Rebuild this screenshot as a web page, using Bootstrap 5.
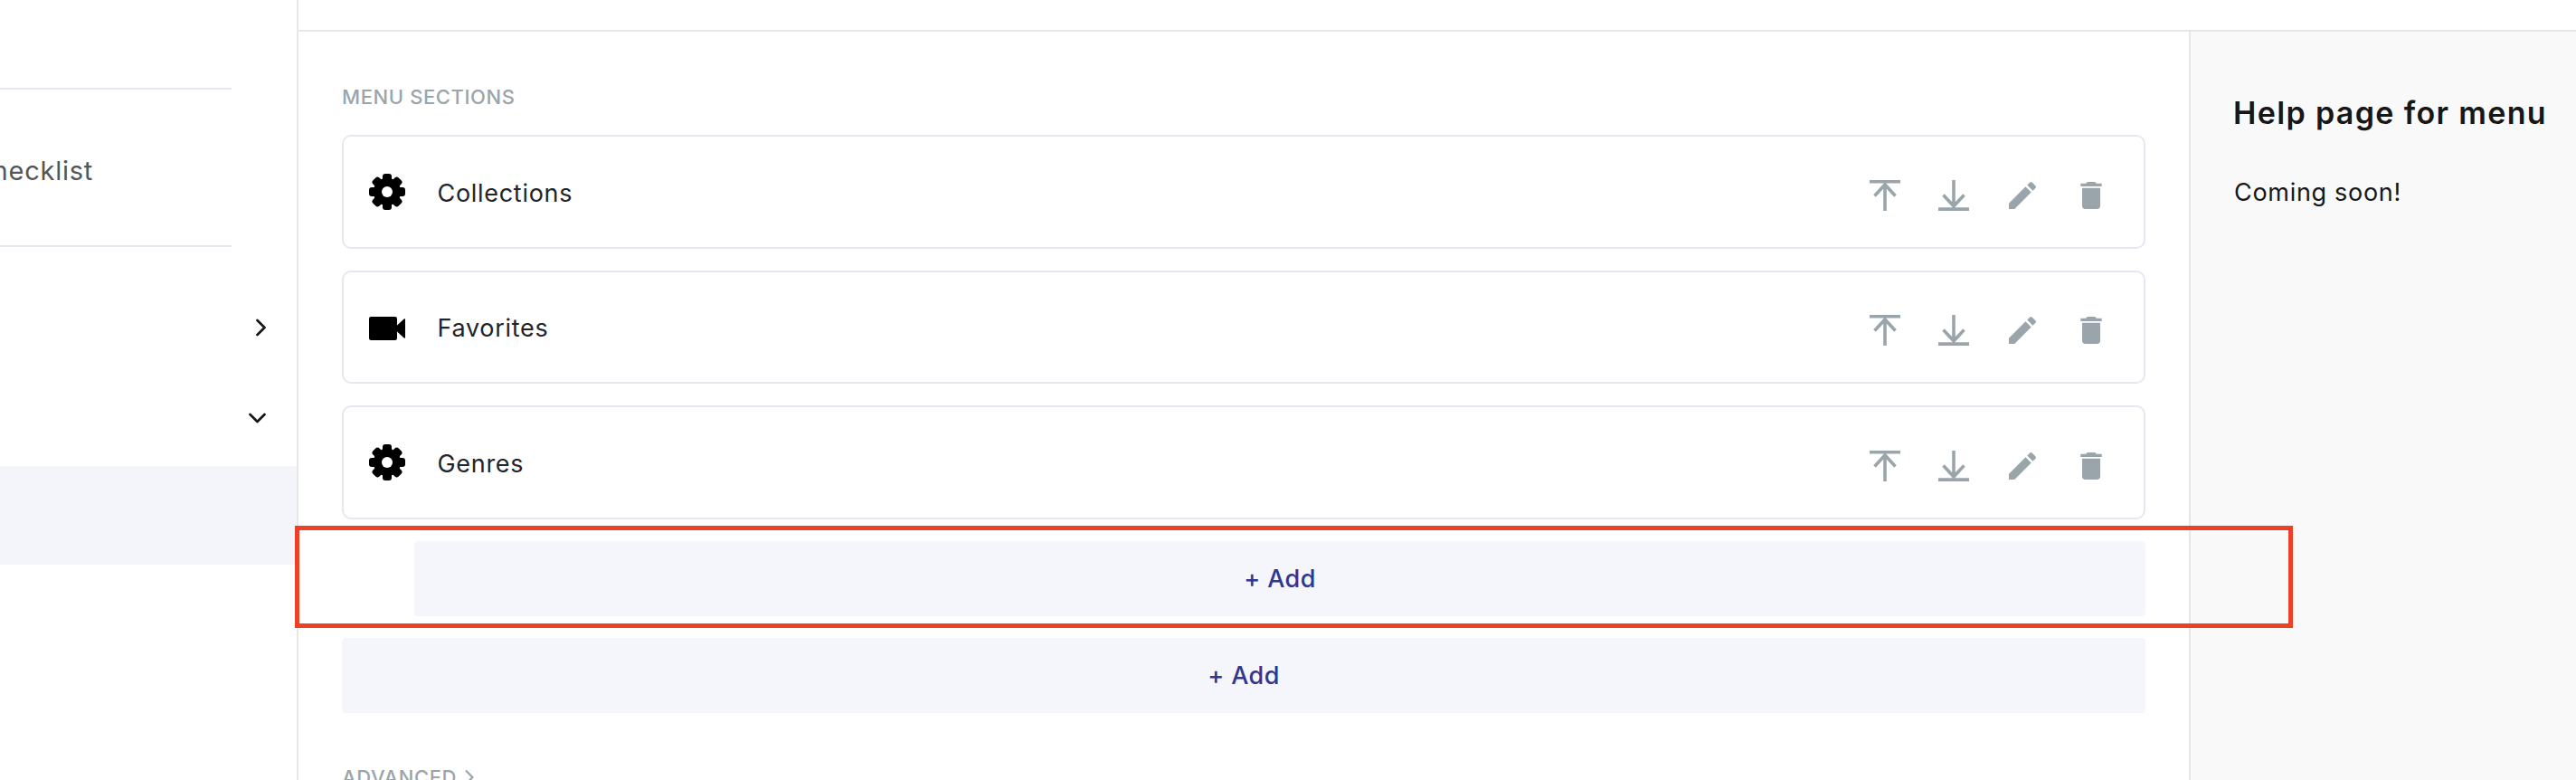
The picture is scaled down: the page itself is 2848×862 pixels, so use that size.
<!DOCTYPE html>
<html lang="en">
<head>
<meta charset="utf-8">
<meta name="viewport" content="width=device-width, initial-scale=1">
<title>Menu sections</title>
<link href="https://cdn.jsdelivr.net/npm/bootstrap@5.3.0/dist/css/bootstrap.min.css" rel="stylesheet">
<style>
  body { font-family: Inter, "Noto Sans", sans-serif; font-size: 27px; letter-spacing: .7px; color: #171717; background: #fff; }
  .app { height: 862px; }
  .side { width: 330px; border-right: 2px solid #e7e7e7; }
  .side-top { height: 97px; }
  .rule { width: 256px; height: 2px; background: #e4e9ef; }
  .side-item { height: 172px; width: 103px; padding-top: 7px; font-size: 29px; letter-spacing: .75px; color: #555; }
  .side-group { height: 100px; padding-right: 34px; }
  .side-group.first { margin-top: 39px; }
  .side-active { margin-top: 3px; height: 109px; background: #f4f5fb; }
  .topbar { height: 35px; border-bottom: 2px solid #e7e7e7; }
  .content { padding: 56px 48px 0; }
  .help { width: 428px; border-left: 2px solid #e7e7e7; background: #f9f9f9; padding: 65px 0 0 47px; }
  .help-title { font-size: 34px; font-weight: 600; line-height: 50px; letter-spacing: 1.35px; margin-bottom: 43px; }
  .help-text { line-height: 40px; padding-left: 1px; }
  .label { font-size: 22px; font-weight: 500; line-height: 32px; letter-spacing: .6px; color: #9aa5ab; }
  .section-list { margin-top: 26px; gap: 24px; }
  .section-row { height: 125.5px; border: 2px solid #e4e9ef; border-radius: 10px; padding: 0 38px 0 28px; color: #212429; }
  .section-name { margin-left: 35.5px; padding-top: 4px; }
  .actions { gap: 36px; padding-top: 8px; color: #9aa5ab; }
  .section-icon { margin-top: 1px; }
  .add { height: 83.25px; background: #f5f6fb; border-radius: 4px; border: 0; padding: 2px 0 0; color: #33368f; font-size: 27px; font-weight: 500; letter-spacing: .4px; }
  .add.nested { margin-left: 80px; }
  .advanced { margin-top: 54.5px; gap: 9px; }
  .callout { left: 326px; top: 581px; width: 2209px; height: 113px; border: 5px solid #ee4026; }
</style>
</head>
<body class="overflow-hidden">
<svg class="d-none">
  <symbol id="gear" viewBox="0 0 40 40">
    <circle cx="20" cy="20" r="15.200"/>
    <rect x="15" width="10" height="40" rx="3"/>
    <rect x="15" width="10" height="40" rx="3" transform="rotate(45 20 20)"/>
    <rect x="15" width="10" height="40" rx="3" transform="rotate(90 20 20)"/>
    <rect x="15" width="10" height="40" rx="3" transform="rotate(135 20 20)"/>
    <circle cx="20" cy="20" r="6" fill="#fff"/>
  </symbol>
  <symbol id="video" viewBox="0 0 40 40">
    <rect y="8" width="31" height="26" rx="2.2"/><path d="M30 18.5L38.600 10.600Q40 9.600 40 11V31Q40 32.400 38.600 31.400L30 23.500z"/>
  </symbol>
  <symbol id="up" viewBox="0 0 40 40"><path d="M3 4.800H37M20 37V7M8.500 20.500L20 8L31.500 20.500" fill="none" stroke="currentColor" stroke-width="3.600"/></symbol>
  <symbol id="down" viewBox="0 0 40 40"><path d="M3 35.100H37M20 3V33M8.500 19.500L20 31.800L31.500 19.500" fill="none" stroke="currentColor" stroke-width="3.600"/></symbol>
  <symbol id="pencil" viewBox="0 0 24 24"><path d="M3 17.250V21h3.750L17.810 9.940l-3.750-3.750L3 17.250zM20.710 7.040c.39-.39.39-1.020 0-1.410l-2.340-2.340a.996.996 0 0 0-1.410 0l-1.830 1.830 3.750 3.750 1.830-1.830z"/></symbol>
  <symbol id="trash" viewBox="0 0 24 24"><path d="M6 19c0 1.100.9 2 2 2h8c1.100 0 2-.9 2-2V7H6v12zM19 4h-3.500l-1-1h-5l-1 1H5v2h14V4z"/></symbol>
</svg>

<div class="app d-flex position-relative overflow-hidden">
  <aside class="side flex-shrink-0">
    <div class="side-top"></div>
    <div class="rule"></div>
    <div class="side-item d-flex align-items-center justify-content-end overflow-hidden">Checklist</div>
    <div class="rule"></div>
    <div class="side-group first d-flex align-items-center justify-content-end">
      <svg width="11" height="20" viewBox="0 0 11 20" fill="none" stroke="#171717" stroke-width="2.700" stroke-linecap="round" stroke-linejoin="round"><path d="M1.500 2L9.500 10L1.500 18"/></svg>
    </div>
    <div class="side-group d-flex align-items-center justify-content-end">
      <svg width="19" height="12" viewBox="0 0 19 12" fill="none" stroke="#171717" stroke-width="2.700" stroke-linecap="round" stroke-linejoin="round"><path d="M1.500 2L9.500 10L17.500 2"/></svg>
    </div>
    <div class="side-active"></div>
  </aside>

  <div class="d-flex flex-column flex-grow-1">
    <header class="topbar flex-shrink-0"></header>
    <div class="d-flex flex-grow-1">
      <main class="content flex-grow-1">
        <div class="label">MENU SECTIONS</div>
        <div class="section-list d-flex flex-column">
          <div class="section-row d-flex align-items-center">
            <svg class="section-icon" width="40" height="40" fill="#000"><use href="#gear"/></svg>
            <span class="section-name">Collections</span>
            <div class="actions d-flex ms-auto">
              <svg width="40" height="40"><use href="#up"/></svg>
              <svg width="40" height="40"><use href="#down"/></svg>
              <svg width="40" height="40" fill="currentColor"><use href="#pencil"/></svg>
              <svg width="40" height="40" fill="currentColor"><use href="#trash"/></svg>
            </div>
          </div>
          <div class="section-row d-flex align-items-center">
            <svg class="section-icon" width="40" height="40" fill="#000"><use href="#video"/></svg>
            <span class="section-name">Favorites</span>
            <div class="actions d-flex ms-auto">
              <svg width="40" height="40"><use href="#up"/></svg>
              <svg width="40" height="40"><use href="#down"/></svg>
              <svg width="40" height="40" fill="currentColor"><use href="#pencil"/></svg>
              <svg width="40" height="40" fill="currentColor"><use href="#trash"/></svg>
            </div>
          </div>
          <div class="section-row d-flex align-items-center">
            <svg class="section-icon" width="40" height="40" fill="#000"><use href="#gear"/></svg>
            <span class="section-name">Genres</span>
            <div class="actions d-flex ms-auto">
              <svg width="40" height="40"><use href="#up"/></svg>
              <svg width="40" height="40"><use href="#down"/></svg>
              <svg width="40" height="40" fill="currentColor"><use href="#pencil"/></svg>
              <svg width="40" height="40" fill="currentColor"><use href="#trash"/></svg>
            </div>
          </div>
          <button class="add nested">+ Add</button>
          <button class="add">+ Add</button>
        </div>
        <div class="advanced label d-flex align-items-center">ADVANCED
          <svg width="10" height="18" viewBox="0 0 10 18" fill="none" stroke="currentColor" stroke-width="2.200"><path d="M1 1.500L8.500 9L1 16.500"/></svg>
        </div>
      </main>
      <aside class="help flex-shrink-0">
        <h1 class="help-title">Help page for menu</h1>
        <p class="help-text mb-0">Coming soon!</p>
      </aside>
    </div>
  </div>

  <div class="callout position-absolute"></div>
</div>
<script src="https://cdn.jsdelivr.net/npm/bootstrap@5.3.0/dist/js/bootstrap.bundle.min.js"></script>
</body>
</html>
